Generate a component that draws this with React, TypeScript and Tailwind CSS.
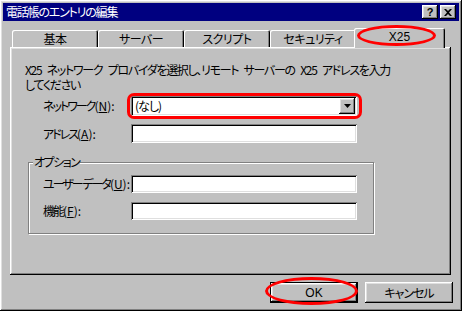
import React from 'react';

const raised =
  'shadow-[inset_-1px_-1px_#000,inset_1px_1px_#fff,inset_-2px_-2px_#808080,inset_2px_2px_#dfdfdf]';
const sunken =
  'shadow-[inset_1px_1px_#808080,inset_-1px_-1px_#fff,inset_2px_2px_#000,inset_-2px_-2px_#dfdfdf]';

function Field({ label, u }: { label: string; u: string }) {
  return (
    <span className="w-[88px] shrink-0 whitespace-nowrap">
      <span className="tracking-[-2px]">{label}</span>(<u>{u}</u>):
    </span>
  );
}

export default function App() {
  const tabs = ['基本', 'サーバー', 'スクリプト', 'セキュリティ'];

  return (
    <div
      className={`relative w-[462px] h-[311px] bg-[#c0c0c0] p-[3px] flex flex-col text-[12px] leading-none text-black font-['Noto_Sans_CJK_JP',sans-serif] [font-feature-settings:'palt'] ${raised}`}
    >
      {/* タイトルバー */}
      <div className="h-[18px] bg-[#000080] flex items-center justify-between pl-[3px] pr-[3px]">
        <span className="text-white text-[12px] tracking-[-1.2px]">電話帳のエントリの編集</span>
        <div className="flex items-center gap-[2px]">
          <div className={`w-[16px] h-[14px] bg-[#c0c0c0] flex items-center justify-center ${raised}`}>
            <span className="text-[11px] font-bold font-['Liberation_Sans',sans-serif] leading-none">?</span>
          </div>
          <div className={`w-[16px] h-[14px] bg-[#c0c0c0] flex items-center justify-center ${raised}`}>
            <svg width="8" height="7" viewBox="0 0 8 7">
              <path d="M0 0h2l2 2 2-2h2L5 3.5 8 7H6L4 5 2 7H0l3-3.5z" fill="#000" />
            </svg>
          </div>
        </div>
      </div>

      {/* タブ */}
      <div className="mt-[7px] ml-[7px] mr-[8px] flex items-end h-[19px] pl-[2px]">
        {tabs.map((t) => (
          <div
            key={t}
            className="w-[86px] h-[17px] flex items-center justify-center tracking-[-0.5px] rounded-t-[2px] shadow-[inset_1px_1px_#fff,inset_-1px_0_#000,inset_-2px_0_#808080]"
          >
            {t}
          </div>
        ))}
        <div className="relative z-10 -ml-[2px] w-[91px] h-[20px] -mb-[1px] bg-[#c0c0c0] flex items-center justify-center pb-[2px] rounded-t-[2px] shadow-[inset_1px_1px_#fff,inset_-1px_0_#000,inset_-2px_0_#808080]">
          <span className="font-['Liberation_Sans',sans-serif]">X25</span>
          <div className="absolute left-[3px] -top-[3px] w-[79px] h-[21px] rounded-[50%] border-[3px] border-[#ff0000]" />
        </div>
      </div>

      {/* パネル */}
      <div className={`ml-[7px] mr-[8px] h-[228px] bg-[#c0c0c0] pt-[15px] flex flex-col ${raised}`}>
        <p className="pl-[15px] leading-[15px] tracking-[-1.3px] [word-spacing:4px] whitespace-nowrap">
          X25 ネットワーク プロバイダを選択し、リモート サーバーの X25 アドレスを入力
          <br />
          してください
        </p>

        <div className="mt-[4px] pl-[33px] flex items-center h-[20px]">
          <Field label="ネットワーク" u="N" />
          <div className={`relative w-[226px] h-[20px] bg-white flex items-center justify-between pl-[4px] pr-[2px] ${sunken}`}>
            <span className="tracking-[-1px]">(なし)</span>
            <div className={`w-[16px] h-[16px] bg-[#c0c0c0] flex items-center justify-center ${raised}`}>
              <svg width="7" height="4" viewBox="0 0 7 4">
                <path d="M0 0h7L3.5 4z" fill="#000" />
              </svg>
            </div>
            <div className="absolute -left-[4px] -right-[5px] -top-[3px] -bottom-[3px] rounded-[7px] border-[3px] border-[#ff0000]" />
          </div>
        </div>

        <div className="mt-[8px] pl-[33px] flex items-center h-[19px]">
          <Field label="アドレス" u="A" />
          <div className={`w-[226px] h-[19px] bg-white ${sunken}`} />
        </div>

        {/* オプション */}
        <div className="relative mt-[19px] ml-[18px] w-[346px] h-[72px] border border-[#808080] shadow-[1px_1px_#fff,inset_1px_1px_#fff] pt-[12px] pl-[14px] flex flex-col gap-[9px]">
          <span className="absolute -top-[7px] left-[4px] bg-[#c0c0c0] px-[1px] tracking-[-1.5px]">オプション</span>
          <div className="flex items-center h-[18px]">
            <Field label="ユーザー データ" u="U" />
            <div className={`w-[226px] h-[18px] bg-white ${sunken}`} />
          </div>
          <div className="flex items-center h-[18px]">
            <Field label="機能" u="F" />
            <div className={`w-[226px] h-[18px] bg-white ${sunken}`} />
          </div>
        </div>
      </div>

      {/* ボタン */}
      <div className="mt-[7px] mr-[6px] flex justify-end gap-[7px]">
        <div className="relative w-[88px] h-[21px] border border-black">
          <div className={`w-full h-full flex items-center justify-center font-['Liberation_Sans',sans-serif] ${raised}`}>
            OK
          </div>
          <div className="absolute -left-[6px] -right-[1px] -top-[6px] -bottom-[3px] rounded-[50%] border-[3px] border-[#ff0000]" />
        </div>
        <div className={`w-[88px] h-[21px] flex items-center justify-center tracking-[-1px] ${raised}`}>キャンセル</div>
      </div>
    </div>
  );
}
